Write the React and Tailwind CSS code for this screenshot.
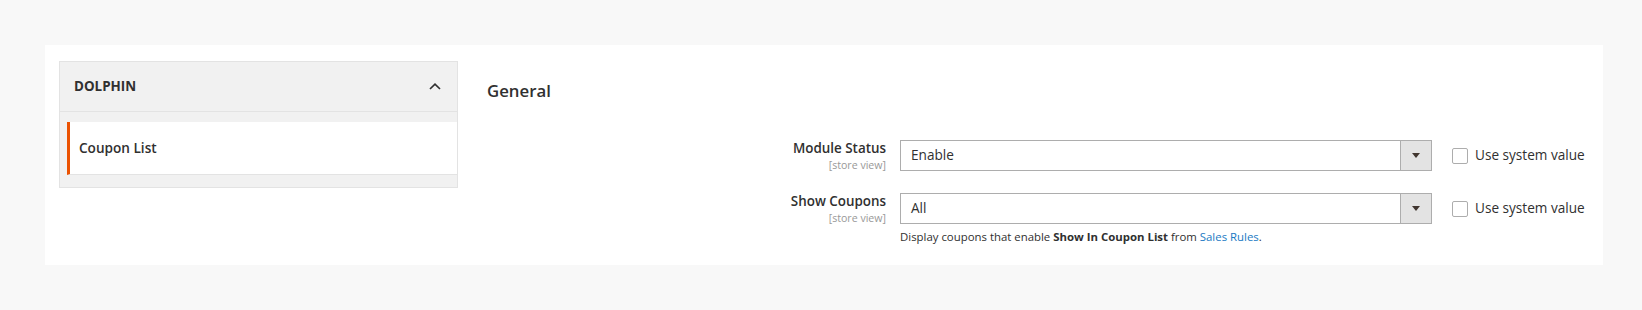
import React from "react";

const font = { fontFamily: '"Open Sans", "Noto Sans", sans-serif' };

function Select({ value }) {
  return (
    <div className="flex h-[31px] w-[532px] border border-[#adadad] bg-white">
      <div className="flex flex-1 items-center pl-[10px] text-[13.6px] text-[#303030]">{value}</div>
      <div className="flex w-[31px] items-center justify-center border-l border-[#adadad] bg-[#e3e3e3]">
        <svg width="8" height="5" viewBox="0 0 8 5">
          <path d="M0 0 L8 0 L4 5 Z" fill="#41362f" />
        </svg>
      </div>
    </div>
  );
}

function Row({ label, value, note }) {
  return (
    <div className="flex items-start">
      <div className="w-[413px] pr-[14px] text-right">
        <div className="text-[13.4px] font-semibold leading-[18px] text-[#303030] mt-[-1px]">{label}</div>
        <div className="text-[10.6px] leading-[14px] text-[#999999] mt-[1px]">[store view]</div>
      </div>
      <div className="flex flex-col">
        <Select value={value} />
        {note && (
          <div className="mt-[5px] text-[11.4px] leading-[16px] text-[#303030]">
            Display coupons that enable <span className="font-bold">Show In Coupon List</span> from{" "}
            <span className="text-[#1979c3]">Sales Rules</span>.
          </div>
        )}
      </div>
      <div className="ml-[20px] flex h-[31px] items-center">
        <div className="h-[16px] w-[16px] rounded-[2px] border border-[#adadad] bg-white" />
        <span className="ml-[7px] text-[13.6px] text-[#303030]">Use system value</span>
      </div>
    </div>
  );
}

export default function App() {
  return (
    <div style={font} className="h-[310px] w-full bg-[#f8f8f8] pt-[45px] pl-[45px] pr-[39px]">
      <div className="flex h-[220px] bg-white pl-[14px] pt-[16px]">
        <div className="w-[399px] self-start border border-[#e3e3e3] bg-[#f1f1f1]">
          <div className="flex h-[50px] items-center justify-between border-b border-[#e3e3e3] pl-[14px] pr-[16px]">
            <span className="text-[13.4px] font-bold text-[#303030]">DOLPHIN</span>
            <svg width="12" height="7" viewBox="0 0 12 7" fill="none">
              <path d="M1 6 L6 1.2 L11 6" stroke="#303030" strokeWidth="1.7" />
            </svg>
          </div>
          <div className="pt-[10px] pb-[12px] pl-[7px]">
            <div className="flex h-[53px] items-center border-l-[3px] border-[#eb5202] bg-white pl-[9px] border-b border-b-[#e3e3e3]">
              <span className="text-[13.6px] font-semibold text-[#303030]">Coupon List</span>
            </div>
          </div>
        </div>
        <div className="ml-[29px] flex-1">
          <div className="mt-[19px] text-[16.8px] font-semibold leading-[22px] text-[#303030]">General</div>
          <div className="mt-[38px] flex flex-col gap-[21px]">
            <Row label="Module Status" value="Enable" />
            <Row label="Show Coupons" value="All" note />
          </div>
        </div>
      </div>
    </div>
  );
}
